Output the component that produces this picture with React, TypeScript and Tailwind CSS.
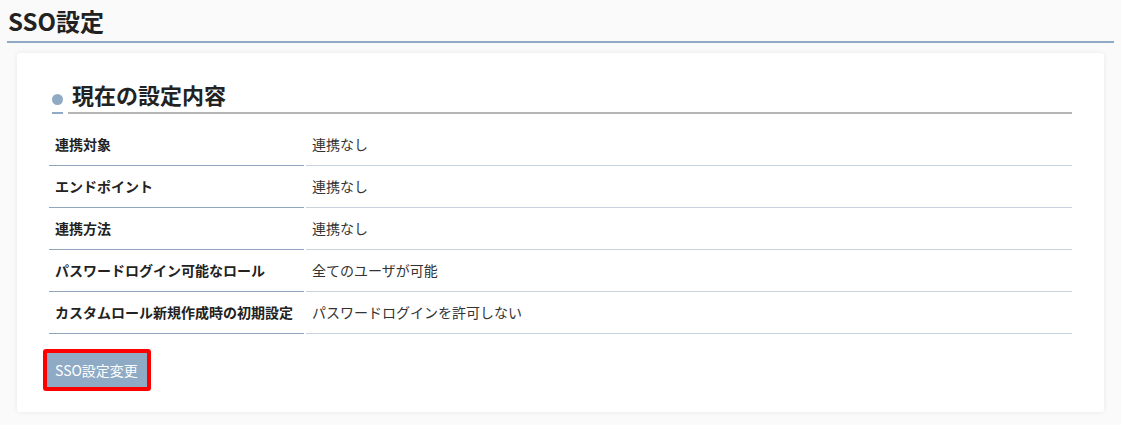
import React from "react";

const rows: [string, string][] = [
  ["連携対象", "連携なし"],
  ["エンドポイント", "連携なし"],
  ["連携方法", "連携なし"],
  ["パスワードログイン可能なロール", "全てのユーザが可能"],
  ["カスタムロール新規作成時の初期設定", "パスワードログインを許可しない"],
];

export default function App() {
  return (
    <div
      className="min-h-[425px] bg-[#fafafa] text-[#222]"
      style={{ fontFamily: '"Noto Sans CJK JP", "Noto Sans", sans-serif' }}
    >
      <div className="mx-[7px]">
        <div className="h-[43px] border-b-2 border-[#8eaac4]">
          <h1 className="pl-[1px] text-[24px] font-bold leading-[41px] text-[#222]">SSO設定</h1>
        </div>
        <div className="mx-[10px] mt-[10px] rounded-[3px] bg-white px-[32px] pb-[21px] pt-[23px] shadow-[0_0_5px_rgba(0,0,0,0.08)]">
          <div className="ml-[3px] flex h-[38px] gap-[5px]">
            <div className="flex w-[11px] items-start border-b-2 border-[#8eaac4]">
              <div className="mt-[18px] h-[11px] w-[11px] rounded-full bg-[#8eaac4]" />
            </div>
            <div className="flex-1 border-b-2 border-[#b5b5b5] pl-[4px] text-[22px] font-bold leading-[36px] text-[#222]">
              現在の設定内容
            </div>
          </div>
          <div className="mt-[10px]">
            {rows.map(([k, v]) => (
              <div key={k} className="flex gap-[2px]">
                <div className="flex h-[42px] w-[255px] items-center border-b border-[#8fa6bd] pl-[6px] text-[14px] font-bold text-[#222]">
                  {k}
                </div>
                <div className="flex h-[42px] flex-1 items-center border-b border-[#c6d3df] pl-[6px] text-[14px] text-[#333]">
                  {v}
                </div>
              </div>
            ))}
          </div>
          <div className="ml-[-6px] mt-[15px] inline-block rounded-[3px] border-4 border-[#ff0000]">
            <button className="flex h-[34px] w-[100px] items-center bg-[#8eaac4] pl-[8px] text-[14px] text-white">
              SSO設定変更
            </button>
          </div>
        </div>
      </div>
    </div>
  );
}
